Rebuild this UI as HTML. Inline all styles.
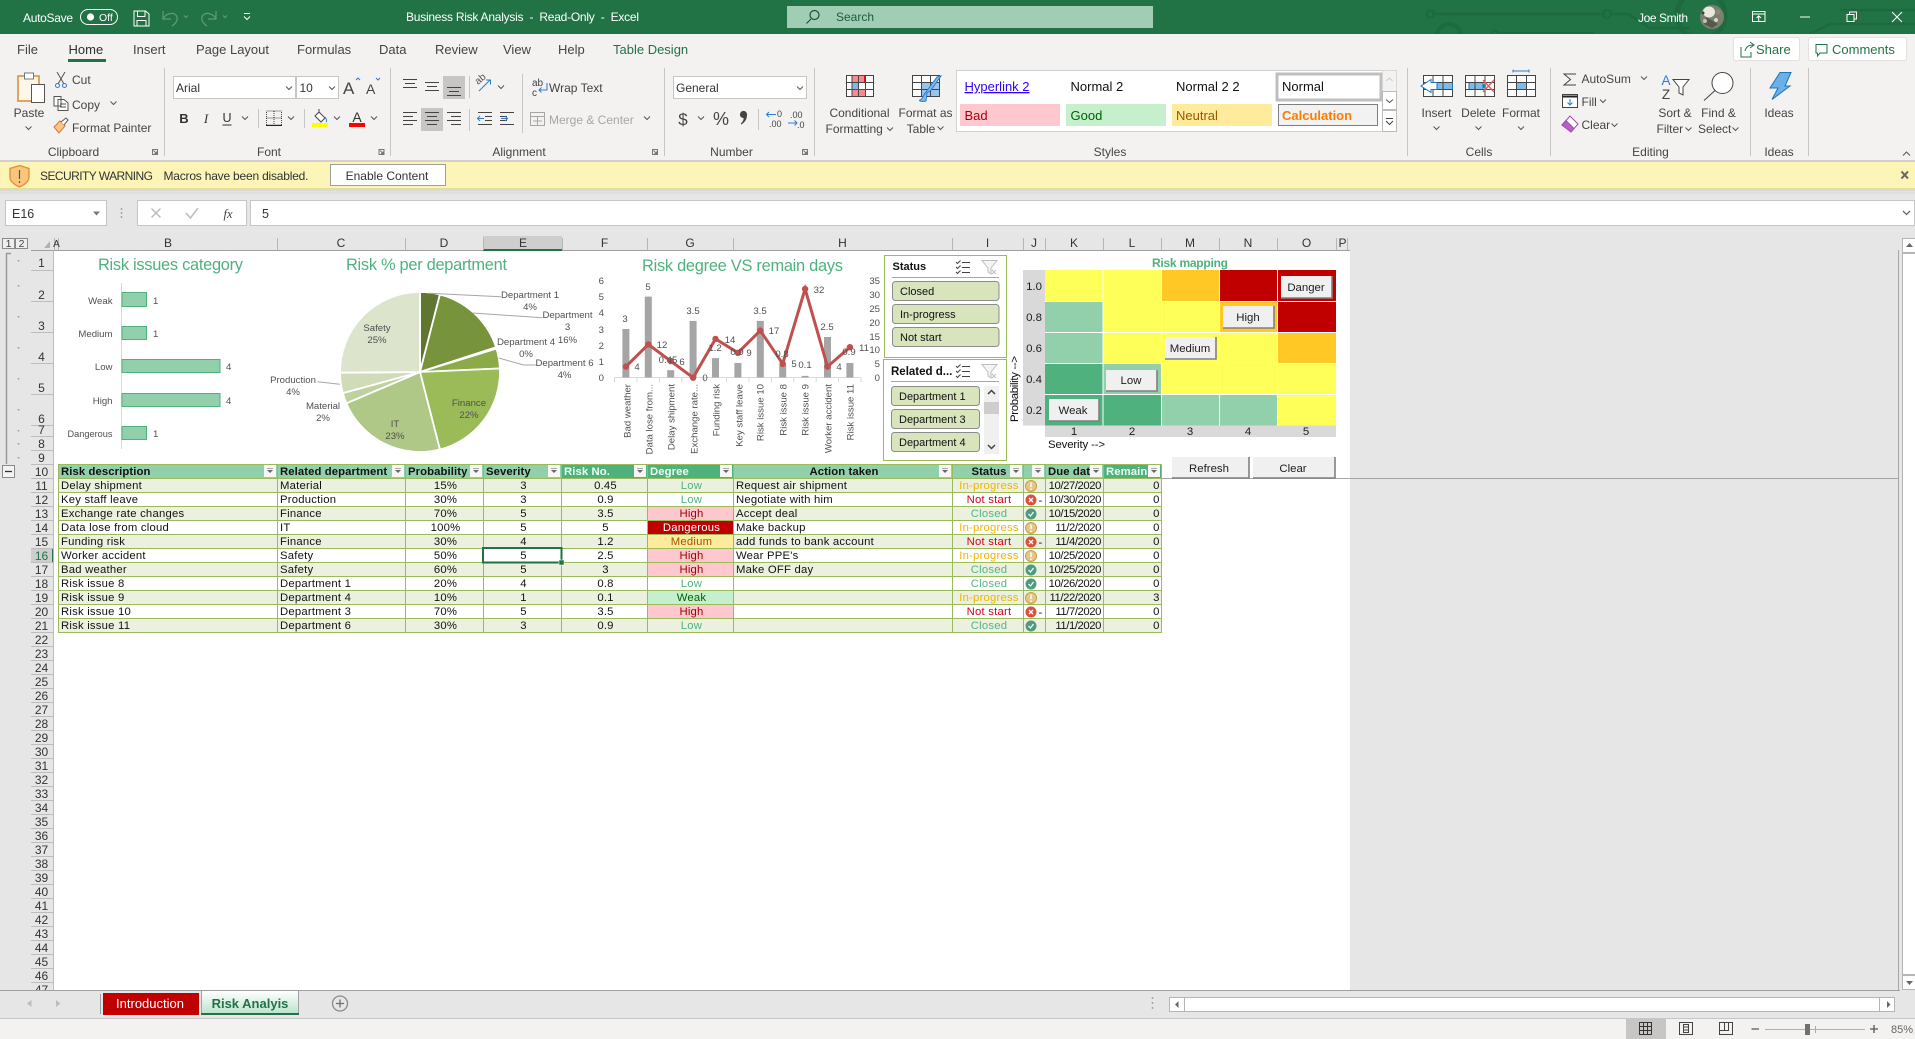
<!DOCTYPE html>
<html><head><meta charset="utf-8"><title>Business Risk Analysis - Excel</title>
<style>
html,body{margin:0;padding:0;width:1915px;height:1039px;overflow:hidden;background:#e6e6e6}
svg{position:absolute;left:0;top:0;display:block}
svg text{font-family:"Liberation Sans",Arial,sans-serif;font-size:12px;fill:#444}
.w text{fill:#fff}
.tb text{font-size:13px;fill:#444}
.rb text{font-size:12px;fill:#444}
.m{text-anchor:middle}.e{text-anchor:end}
.rh text{font-size:12px;fill:#333;text-anchor:middle}
.ch text{font-size:12px;fill:#333;text-anchor:middle}
.t text{font-size:16.4px;fill:#4fb27e;text-anchor:middle}
.l text{font-size:9.6px;fill:#505050}
.s text{font-size:11px;fill:#111}
.mp text{font-size:11.4px;fill:#1c1c1c}
table{position:absolute;left:58px;top:464px;border-collapse:collapse;table-layout:fixed;width:1103px;font:11.3px/11px "Liberation Sans",Arial,sans-serif;color:#111}
td,th{border:1px solid #9bbb59;padding:2px 0 0 2px;box-sizing:border-box;height:14px;white-space:nowrap;overflow:hidden;position:relative;text-align:left;font-weight:normal;letter-spacing:.22px;vertical-align:top}
th{background:#92d0ac;font-weight:bold;color:#111;letter-spacing:.1px}
th.d{background:#4fb27e;color:#eafff4}
tr.o td{background:#ebf1de}
td.c,th.c{text-align:center}
td.r{text-align:right;padding-right:2px;letter-spacing:-.42px}
th i{position:absolute;right:1px;top:0;width:12px;height:12px;background:#f6f6f6;border:0}
th i:after{content:"";position:absolute;left:3px;top:5px;border:3px solid transparent;border-top:3px solid #666;border-bottom:0}
th i:before{content:"";position:absolute;left:3px;top:3px;width:6px;height:1px;background:#aaa}
td.low{color:#4fb27e}
td.high{background:#ffc7ce!important;color:#9c0006}
td.dang{background:#c00000!important;color:#fff}
td.med{background:#ffeb9c!important;color:#9c5700}
td.weak{background:#c6efce!important;color:#006100}
td.ip{color:#f0b400}
td.ns{color:#d0021b}
td.cl{color:#52b788}
</style></head><body>
<svg width="1915" height="1039" viewBox="0 0 1915 1039">
<!-- title bar -->
<rect width="1915" height="34" fill="#217346"/>
<g fill="none" stroke="#1c6a3e" stroke-width="2.5">
<circle cx="1430" cy="14" r="3.5"/><path d="M1434 14H1602"/><circle cx="1607" cy="14" r="4"/><path d="M1611 14H1628L1650 28H1690"/>
<circle cx="1449" cy="36" r="12" stroke-width="4"/><circle cx="1495" cy="34" r="3.5"/><path d="M1499 33H1594"/>
<circle cx="1701" cy="15" r="24" stroke-width="5"/><path d="M1810 34L1830 24H1915M1840 10H1915"/></g>
<g class="w">
<text x="23" y="22" textLength="50">AutoSave</text>
<rect x="80.5" y="9.5" width="37" height="15" rx="7.5" fill="none" stroke="#fff"/><circle cx="90.5" cy="17" r="3.6" fill="#fff"/>
<text x="99" y="21" style="font-size:10.5px">Off</text>
<text x="406" y="21" textLength="233" style="font-size:12px;white-space:pre">Business Risk Analysis  -  Read-Only  -  Excel</text>
<text x="1638" y="22" textLength="50">Joe Smith</text>
</g>
<g fill="none" stroke="#fff">
<path d="M134 11H145.5L149 14V26H134ZM137.5 11V16.5H145V11M137 26V20.5H146V26"/>
<path d="M1752.5 11.5H1765V21.5H1752.5ZM1752.5 14H1765M1758.7 21V16M1756.5 18L1758.7 15.8L1761 18"/>
<path d="M1800 17H1810M1847 14.5V21.5H1854V14.5ZM1849.5 14V12H1856.5V19H1854"/>
<path d="M1892 12L1902 22M1902 12L1892 22"/></g>
<g fill="none" stroke="#5f9a7a" stroke-width="1.2">
<path d="M163 11V19H171M163 19C166 13 175 11 177 17C178 21 175 24 172 26M184 15.5l2 2 2-2M216 11V19H208M216 19C213 13 204 11 202 17C201 21 204 24 207 26M223 15.5l2 2 2-2"/></g>
<path d="M244 13.5H250M244 16.5l3 3 3-3" fill="none" stroke="#fff"/>
<rect x="787" y="6" width="366" height="22" fill="#a0cdb4"/>
<circle cx="814.5" cy="15" r="4.5" fill="none" stroke="#1a5436" stroke-width="1.2"/><path d="M811 19L806.5 23.5" stroke="#1a5436" stroke-width="1.2"/>
<text x="836" y="21" style="fill:#1d5c3c">Search</text>
<ellipse cx="1712" cy="17" rx="12" ry="12" fill="#7b7f70"/><ellipse cx="1709" cy="12" rx="6" ry="5.5" fill="#ece7dd"/><path d="M1706 17L1718 24L1712 28L1704 24Z" fill="#55584c"/><circle cx="1718" cy="12" r="2.5" fill="#8f8a78"/><circle cx="1705" cy="21" r="2" fill="#c5c0ae"/><circle cx="1716" cy="20" r="2" fill="#d8d3c4"/><circle cx="1703" cy="13" r="1.5" fill="#3c3f36"/>
<!-- ribbon -->
<rect y="34" width="1915" height="126" fill="#f3f2f1"/>
<g class="tb">
<text x="17" y="54">File</text><text x="68.5" y="54" style="fill:#2f2f2f">Home</text><text x="133" y="54">Insert</text><text x="196" y="54">Page Layout</text><text x="297" y="54">Formulas</text><text x="379" y="54">Data</text><text x="435" y="54">Review</text><text x="503" y="54">View</text><text x="558" y="54">Help</text><text x="613" y="54" style="fill:#217346">Table Design</text></g>
<rect x="68" y="59" width="38" height="3" fill="#217346"/>
<rect x="1733.5" y="37.5" width="66" height="23" rx="2" fill="#fff" stroke="#e3e2e0"/>
<rect x="1808.5" y="37.5" width="98" height="23" rx="2" fill="#fff" stroke="#e3e2e0"/>
<text x="1756" y="54" style="fill:#217346;font-size:13px">Share</text><text x="1832" y="54" style="fill:#217346;font-size:13px">Comments</text>
<path d="M1741 47V57H1751V52M1745 51C1746 47 1749 45 1753 45M1750 42L1754 45L1750 48" fill="none" stroke="#217346"/>
<path d="M1816 44.5H1827V53H1820L1817.5 56V53H1816Z" fill="none" stroke="#217346"/>
<path d="M164.5 68V156M390.5 68V156M664.5 68V156M814.5 68V156M1407.5 68V156M1550.5 68V156M1750.5 68V156M1808.5 68V156" stroke="#c8c6c4"/>
<path d="M258.5 109V128M304.5 109V128M469.5 76V98M469.5 109V131M522.5 74V133M758.5 109V130" stroke="#c8c6c4"/>
<!-- input boxes -->
<rect x="173.5" y="76.5" width="122" height="22" fill="#fff" stroke="#c8c6c4"/>
<rect x="296.5" y="76.5" width="42" height="22" fill="#fff" stroke="#c8c6c4"/>
<rect x="673.5" y="76.5" width="133" height="22" fill="#fff" stroke="#c8c6c4"/>
<g class="rb">
<text class="m" x="73.5" y="156">Clipboard</text><text class="m" x="269" y="156">Font</text><text class="m" x="519" y="156">Alignment</text><text class="m" x="731.5" y="156">Number</text><text class="m" x="1110" y="156">Styles</text><text class="m" x="1479" y="156">Cells</text><text class="m" x="1650.5" y="156">Editing</text><text class="m" x="1779" y="156">Ideas</text>
<text class="m" x="29" y="117">Paste</text><text x="72" y="84">Cut</text><text x="72" y="109">Copy</text><text x="72" y="132">Format Painter</text>
<text x="176" y="92" style="fill:#333">Arial</text><text x="299.5" y="92" style="fill:#333">10</text>
<text x="549" y="92">Wrap Text</text><text x="549" y="124" style="fill:#a6a6a6">Merge &amp; Center</text>
<text x="676" y="92" style="fill:#333">General</text>
<text class="m" x="859.5" y="117">Conditional</text><text x="825.5" y="133">Formatting</text>
<text class="m" x="925.5" y="117">Format as</text><text class="m" x="921" y="133">Table</text>
<text class="m" x="1436.5" y="117">Insert</text><text class="m" x="1478.5" y="117">Delete</text><text class="m" x="1521" y="117">Format</text>
<text x="1581.5" y="83">AutoSum</text><text x="1581.5" y="106">Fill</text><text x="1581.5" y="129">Clear</text>
<text class="m" x="1675" y="117">Sort &amp;</text><text x="1656.5" y="133">Filter</text>
<text class="m" x="1718.5" y="117">Find &amp;</text><text x="1698" y="133">Select</text>
<text class="m" x="1779" y="117">Ideas</text>
</g>
<!-- clipboard icons -->
<rect x="18" y="76" width="21" height="25" fill="#fdf6ea" stroke="#d98a2b" stroke-width="1.5"/>
<rect x="24.5" y="73" width="9" height="6" fill="#fff" stroke="#777"/>
<rect x="31.5" y="84.5" width="13" height="18" fill="#fff" stroke="#555"/>
<path d="M57 72L64 84M65 72L58 84" stroke="#555" fill="none"/><circle cx="57.5" cy="85.5" r="2" fill="none" stroke="#2b7cd3"/><circle cx="64.5" cy="85.5" r="2" fill="none" stroke="#2b7cd3"/>
<path d="M54 96.5H61L61 106H54ZM58 99.5H64L68 103V110.5H58ZM60 104H66M60 107H66" fill="#fdfdfd" stroke="#555"/>
<path d="M54 127L60 121L65 126L59 133Z" fill="#f7c68f" stroke="#d9772a"/><path d="M61 122L66 118L68 120L64 125" fill="#fff" stroke="#555"/>
<path d="M157.5 149.5H152.5V154.5H157.5ZM153.5 150.5L156.5 153.5M156.5 151.5V153.5H154.5" fill="none" stroke="#777"/>
<path d="M384 149.5H379V154.5H384ZM380 150.5L383 153.5M383 151.5V153.5H381" fill="none" stroke="#777"/>
<path d="M657.5 149.5H652.5V154.5H657.5ZM653.5 150.5L656.5 153.5M656.5 151.5V153.5H654.5" fill="none" stroke="#777"/>
<path d="M807.5 149.5H802.5V154.5H807.5ZM803.5 150.5L806.5 153.5M806.5 151.5V153.5H804.5" fill="none" stroke="#777"/>
<!-- font group -->
<text x="343" y="94" style="font-size:17px;fill:#444">A</text><path d="M356 80l2-2 2 2" fill="none" stroke="#2b7cd3"/>
<text x="366" y="94" style="font-size:14px;fill:#444">A</text><path d="M376 78l2 2 2-2" fill="none" stroke="#2b7cd3"/>
<text class="m" x="184" y="123" style="font-size:13px;font-weight:bold;fill:#333">B</text>
<text class="m" x="206" y="123" style="font-size:13px;font-style:italic;font-family:'Liberation Serif';fill:#333">I</text>
<text class="m" x="227" y="122" style="font-size:12.5px;fill:#333">U</text><path d="M222.5 125H231.5" stroke="#333"/>
<path d="M266.5 111H281.5V125H266.5Z M274 111V125 M266.5 118H281.5" fill="none" stroke="#444" stroke-dasharray="1 1"/><path d="M266 125.5H282" stroke="#222"/>
<path d="M319 112L325 118L321 122L315 116ZM319 112V109" fill="#fff" stroke="#444"/><path d="M325 117C327 120 327 121 326 122" stroke="#2b7cd3" fill="none"/><rect x="312" y="123" width="16" height="4" fill="#ffff00"/>
<text class="m" x="357" y="122" style="font-size:14px;fill:#333">A</text><rect x="349" y="123" width="16" height="4" fill="#ff0000"/>
<!-- alignment -->
<rect x="443" y="76" width="22" height="23" fill="#c8c6c4"/><rect x="421" y="108" width="22" height="23" fill="#c8c6c4"/>
<path d="M403 79.5H417M405 83.5H415M403 87.5H417M425 82.5H439M427 86.5H437M425 90.5H439M447 87.5H461M449 91.5H459M447 95.5H461
M403 112.5H417M403 116.5H413M403 120.5H417M403 124.5H413M425 112.5H439M427 116.5H437M425 120.5H439M427 124.5H437M447 112.5H461M451 116.5H461M447 120.5H461M451 124.5H461
M478 124.5H492M478 112.5H492M485 116.5H492M485 120.5H492M500 124.5H514M500 112.5H514M500 116.5H507M500 120.5H507" stroke="#444" fill="none"/>
<path d="M484 118.5H477.5M480 116L477.5 118.5L480 121M501 118.5H507.5M505 116L507.5 118.5L505 121" fill="none" stroke="#2b7cd3"/>
<path d="M479 91L490 80M486 80H490.5V84.5" stroke="#2b7cd3" fill="none"/><text x="478" y="85" transform="rotate(-40 478 85)" style="font-size:10px;fill:#555">ab</text>
<text x="532" y="86" style="font-size:10px;fill:#444">ab</text><text x="532" y="96" style="font-size:10px;fill:#444">c</text><path d="M547 83V90H539M541.5 87.5L539 90L541.5 92.5" stroke="#2b7cd3" fill="none"/>
<path d="M530.5 112.5H544.5V125.5H530.5ZM530.5 116.5H544.5M537.5 116.5V125.5M533 121H542" fill="none" stroke="#a6a6a6"/>
<!-- number -->
<text class="m" x="683" y="125" style="font-size:17px;fill:#444">$</text>
<text class="m" x="721" y="125" style="font-size:18px;fill:#444">%</text>
<circle cx="743.5" cy="114.5" r="3.6" fill="#444"/><path d="M746.8 115C747.2 119 745 122 741.5 124.5L740.8 123.5C743 121.5 744 119.5 743.5 117Z" fill="#444"/>
<text x="777" y="117" style="font-size:9px;fill:#444">0</text><text x="769" y="127" style="font-size:9px;fill:#444">.00</text>
<path d="M776 114.5H766.5M769 112L766.5 114.5L769 117" stroke="#2b7cd3" fill="none"/>
<text x="790" y="118" style="font-size:9px;fill:#444">.00</text><text x="797" y="128" style="font-size:9px;fill:#444">.0</text>
<path d="M788 123H797M794.5 120.5L797 123L794.5 125.5" stroke="#2b7cd3" fill="none"/>
<!-- CF icon -->
<rect x="846.5" y="75.5" width="27" height="21" fill="#fff"/>
<rect x="851.5" y="75.5" width="13" height="7" fill="#f9898c"/><rect x="851.5" y="82.5" width="7" height="7" fill="#7fb9e8"/><rect x="851.5" y="89.5" width="14" height="7" fill="#f9898c"/>
<path d="M846.5 75.5H873.5V96.5H846.5ZM846.5 82.5H873.5M846.5 89.5H873.5M852 75.5V96.5M858.5 75.5V96.5M865.5 75.5V96.5" fill="none" stroke="#444"/>
<path d="M851.5 75.5H864.5V82.5M851.5 89.5H865.5V96.5" fill="none" stroke="#d11"/>
<!-- FT icon -->
<rect x="912.5" y="75.5" width="27" height="21" fill="#fff"/><rect x="921.5" y="82.5" width="18" height="14" fill="#9ac4ec"/>
<path d="M912.5 75.5H939.5V96.5H912.5ZM912.5 82.5H939.5M912.5 89.5H939.5M921.5 75.5V96.5M930.5 75.5V96.5" fill="none" stroke="#444"/>
<path d="M941 76L931 90L927 93L926 101C922 102 918 101 920 100C923 99 923 95 926 92L937 77Z" fill="#7fb9e8" stroke="#2b7cd3"/>
<!-- styles gallery -->
<rect x="956.5" y="70.5" width="440" height="61" fill="#fff" stroke="#d0d0d0"/>
<text x="964.5" y="91" style="font-size:13px;fill:#3300ff;text-decoration:underline">Hyperlink 2</text>
<text x="1070.5" y="91" style="font-size:13px;fill:#111">Normal 2</text><text x="1176" y="91" style="font-size:13px;fill:#111">Normal 2 2</text>
<rect x="960" y="104" width="100" height="22" fill="#ffc7ce"/><text x="964.5" y="120" style="font-size:13px;fill:#9c0006">Bad</text>
<rect x="1066" y="104" width="100" height="22" fill="#c6efce"/><text x="1070.5" y="120" style="font-size:13px;fill:#006100">Good</text>
<rect x="1172" y="104" width="100" height="22" fill="#ffeb9c"/><text x="1176" y="120" style="font-size:13px;fill:#9c5700">Neutral</text>
<rect x="1277" y="74" width="104" height="26" fill="#fff" stroke="#bfbfbf" stroke-width="3"/><text x="1282" y="91" style="font-size:13px;fill:#111">Normal</text>
<rect x="1278.5" y="104.5" width="99" height="21" fill="#f2f2f2" stroke="#7f7f7f"/><text x="1282" y="120" style="font-size:13px;font-weight:bold;fill:#fa7d00">Calculation</text>
<rect x="1382.5" y="70.5" width="14" height="21" fill="#f3f2f1" stroke="#d8d8d8"/><rect x="1382.5" y="91.5" width="14" height="18" fill="#fff" stroke="#bbb"/><rect x="1382.5" y="110.5" width="14" height="21" fill="#fff" stroke="#bbb"/>
<path d="M1386.5 81l3-3 3 3" stroke="#ccc" fill="none"/><path d="M1386 118.5h7M1386 121l3.5 3.5 3.5-3.5" stroke="#444" fill="none"/>
<!-- cells icons -->
<g fill="none" stroke="#444">
<rect x="1423.5" y="75.5" width="29" height="21" fill="#fff"/><rect x="1465.5" y="75.5" width="29" height="21" fill="#fff"/><rect x="1507.5" y="75.5" width="28" height="21" fill="#fff"/>
<rect x="1431" y="82.5" width="21.5" height="7" fill="#7fb9e8" stroke="#1e74be"/><rect x="1469" y="82.5" width="14" height="7" fill="#7fb9e8" stroke="#1e74be"/><rect x="1516.5" y="82.5" width="10" height="7" fill="#7fb9e8" stroke="#1e74be"/>
<path d="M1423.5 82.5H1452.5M1423.5 89.5H1452.5M1433 75.5V96.5M1443 75.5V96.5M1465.5 82.5H1494.5M1465.5 89.5H1494.5M1475 75.5V96.5M1485 75.5V96.5M1507.5 82.5H1535.5M1507.5 89.5H1535.5M1516.5 75.5V96.5M1526.5 75.5V96.5"/>
</g>
<path d="M1431 79.5L1421 86L1431 92.5V89.5H1437V82.5H1431Z" fill="#fff" stroke="#1e74be"/>
<path d="M1483 80L1494 92M1494 80L1483 92" stroke="#ef5b5b" stroke-width="1.5"/><path d="M1483 83.5L1486.5 86L1483 88.5Z" fill="#1e74be"/>
<path d="M1513 71H1529M1513 69.5V72.5M1529 69.5V72.5" stroke="#2b7cd3" fill="none"/>
<!-- editing icons -->
<path d="M1576 74H1564L1570.5 79.5L1564 85H1576" fill="none" stroke="#444"/>
<rect x="1562.5" y="94.5" width="15" height="13" fill="#fff" stroke="#444"/><path d="M1562.5 96.5H1577.5" stroke="#222" stroke-width="2"/><path d="M1570 99V105M1567.5 102.5L1570 105L1572.5 102.5" fill="none" stroke="#2b7cd3"/>
<path d="M1562 125L1570 116L1578 124L1571 132Z" fill="#fff" stroke="#a349b6"/><path d="M1562 125L1566 120.5L1574 128.5L1571 132Z" fill="#b660c5" stroke="#a349b6"/>
<text class="m" x="1666" y="85" style="font-size:13.5px;fill:#2b7cd3">A</text><text class="m" x="1666" y="99" style="font-size:13.5px;fill:#444">Z</text>
<path d="M1673 79.5H1689L1683 87V95L1679 93V87Z" fill="#fff" stroke="#444"/>
<circle cx="1722.5" cy="83" r="10.5" fill="#fff" stroke="#444"/><path d="M1715 90.5L1704 100.5" stroke="#444"/>
<path d="M1780 72.5H1791L1785 86H1790L1772 99.5L1778 88H1770Z" fill="#6cb0e8" stroke="#1e74be"/>
<path d="M286 86.5l3 3 3-3M329 86.5l3 3 3-3M242 116.5l3 3 3-3M288 116.5l3 3 3-3M334 116.5l3 3 3-3M371 116.5l3 3 3-3M498 85.5l3 3 3-3M644 116.5l3 3 3-3M797 86.5l3 3 3-3M698 116.5l3 3 3-3M887 127.5l3 3 3-3M937.5 126.5l3 3 3-3M1433.5 126.5l3 3 3-3M1475.5 126.5l3 3 3-3M1518 126.5l3 3 3-3M1641 76.5l3 3 3-3M1600 99.5l3 3 3-3M1611.5 123.5l3 3 3-3M1685.5 127.5l3 3 3-3M1732.5 127.5l3 3 3-3M1386 99.5l3.5 3 3.5-3M25.5 126.5l3 3 3-3M110.5 101.5l3 3 3-3" fill="none" stroke="#555"/>
<path d="M1903 155.5l3.5-3.5 3.5 3.5" fill="none" stroke="#555"/>
<!-- security bar -->
<rect y="160" width="1915" height="2" fill="#d2d0ce"/>
<rect y="162" width="1915" height="27" fill="#fcf5b7"/><rect y="188" width="1915" height="1" fill="#e3dc9a"/>
<rect y="189" width="1915" height="850" fill="#e6e6e6"/><rect y="189" width="1915" height="2" fill="#d9d9d9"/><rect y="191" width="1915" height="3" fill="#e0e0e0"/>
<path d="M19.5 165.5L29 168.5V177C29 182 24 185 19.5 187C15 185 10 182 10 177V168.5Z" fill="#f8c77e" stroke="#e88c2c" stroke-width="1.3"/>
<path d="M19.5 170V179M19.5 181V183" stroke="#555" stroke-width="1.2"/>
<text x="40" y="180" textLength="113" style="fill:#333">SECURITY WARNING</text>
<text x="163.5" y="180" textLength="145" style="fill:#333">Macros have been disabled.</text>
<rect x="330.5" y="164.5" width="115" height="21" fill="#fff" stroke="#9f9f9f"/>
<text class="m" x="387" y="180" style="fill:#333">Enable Content</text>
<path d="M1901.5 171.5L1908 178.5M1908 171.5L1901.5 178.5" stroke="#666" stroke-width="2"/>
<!-- formula bar -->
<rect x="5.5" y="200.5" width="101" height="25" fill="#fff" stroke="#c8c6c4"/>
<text x="12" y="218" style="font-size:12.5px;fill:#333">E16</text><path d="M93 211.5H100L96.5 215.5Z" fill="#777"/>
<path d="M121.5 208V210M121.5 212V214M121.5 216V218" stroke="#a6a6a6" stroke-width="1.5"/>
<rect x="137.5" y="200.5" width="109" height="25" fill="#fff" stroke="#c8c6c4"/>
<path d="M151.5 208.5L160.5 217.5M160.5 208.5L151.5 217.5" stroke="#bbb" stroke-width="1.5"/><path d="M186 213L190.5 218L198 208" stroke="#bbb" stroke-width="1.5" fill="none"/>
<text class="m" x="228" y="218" style="font-size:12.5px;font-style:italic;font-family:'Liberation Serif';fill:#444">fx</text>
<rect x="250.5" y="200.5" width="1664" height="25" fill="#fff" stroke="#c8c6c4"/>
<text x="262" y="218" style="font-size:12.5px;fill:#333">5</text>
<path d="M1903 211l3.5 3.5 3.5-3.5" fill="none" stroke="#666" stroke-width="1.3"/>
<!-- sheet -->
<rect x="54" y="250" width="1296" height="740" fill="#fff"/>
<!-- col header -->
<rect x="483" y="236" width="79" height="14" fill="#cecece"/>
<path d="M31 250.5H1350" stroke="#9f9f9f"/><rect x="483" y="249" width="79" height="2" fill="#217346"/>
<path d="M54.5 238V250M58.5 238V250M277.5 238V250M405.5 238V250M483.5 238V250M562.5 238V250M647.5 238V250M733.5 238V250M952.5 238V250M1023.5 238V250M1045.5 238V250M1103.5 238V250M1161.5 238V250M1219.5 238V250M1277.5 238V250M1336.5 238V250M1347.5 238V250" stroke="#b5b5b5"/>
<path d="M44 248L50 241V248Z" fill="#b0b0b0"/>
<g class="ch"><text x="56.5" y="247" style="font-size:10px">A</text><text x="168" y="247">B</text><text x="341" y="247">C</text><text x="444" y="247">D</text><text x="523" y="247">E</text><text x="604.5" y="247">F</text><text x="690" y="247">G</text><text x="842.5" y="247">H</text><text x="987.5" y="247">I</text><text x="1034" y="247">J</text><text x="1074" y="247">K</text><text x="1132" y="247">L</text><text x="1190" y="247">M</text><text x="1248" y="247">N</text><text x="1306.5" y="247">O</text><text x="1342.5" y="247">P</text></g>
<!-- outline -->
<rect x="2.5" y="238.5" width="12" height="10" fill="#efefef" stroke="#8a8a8a"/><rect x="15.5" y="238.5" width="12" height="10" fill="#efefef" stroke="#8a8a8a"/>
<text class="m" x="8.5" y="247" style="font-size:10.5px;fill:#444">1</text><text class="m" x="21.5" y="247" style="font-size:10.5px;fill:#444">2</text>
<path d="M11 253.5H6.5V464" fill="none" stroke="#9a9a9a" stroke-width="1.5"/>
<path d="M18.5 260v1.5M18.5 285v1.5M18.5 316v1.5M18.5 347v1.5M18.5 378v1.5M18.5 409v1.5M18.5 430v1.5M18.5 443v1.5M18.5 457v1.5" stroke="#9a9a9a" stroke-width="1.5"/>
<rect x="2.5" y="465.5" width="12" height="12" fill="#f4f4f4" stroke="#8a8a8a"/><path d="M5 471.5H12" stroke="#333" stroke-width="1.3"/>
<!-- row header -->
<rect x="31" y="548" width="23" height="14" fill="#cecece"/><rect x="52" y="548" width="2" height="14" fill="#217346"/>
<path d="M31 270.5H54M31 301.5H54M31 332.5H54M31 363.5H54M31 394.5H54M31 425.5H54M31 436.5H54M31 450.5H54M31 464.5H54M31 478.5H54M31 492.5H54M31 506.5H54M31 520.5H54M31 534.5H54M31 548.5H54M31 562.5H54M31 576.5H54M31 590.5H54M31 604.5H54M31 618.5H54M31 632.5H54M31 646.5H54M31 660.5H54M31 674.5H54M31 688.5H54M31 702.5H54M31 716.5H54M31 730.5H54M31 744.5H54M31 758.5H54M31 772.5H54M31 786.5H54M31 800.5H54M31 814.5H54M31 828.5H54M31 842.5H54M31 856.5H54M31 870.5H54M31 884.5H54M31 898.5H54M31 912.5H54M31 926.5H54M31 940.5H54M31 954.5H54M31 968.5H54M31 982.5H54M53.5 250V990" stroke="#bdbdbd"/>
<g class="rh">
<text x="41.5" y="267">1</text><text x="41.5" y="299">2</text><text x="41.5" y="330">3</text><text x="41.5" y="361">4</text><text x="41.5" y="392">5</text><text x="41.5" y="423">6</text><text x="41.5" y="434">7</text><text x="41.5" y="448">8</text><text x="41.5" y="462">9</text><text x="41.5" y="476">10</text>
<text x="41.5" y="490">11</text><text x="41.5" y="504">12</text><text x="41.5" y="518">13</text><text x="41.5" y="532">14</text><text x="41.5" y="546">15</text><text x="41.5" y="560" style="fill:#217346">16</text><text x="41.5" y="574">17</text><text x="41.5" y="588">18</text><text x="41.5" y="602">19</text><text x="41.5" y="616">20</text><text x="41.5" y="630">21</text><text x="41.5" y="644">22</text><text x="41.5" y="658">23</text><text x="41.5" y="672">24</text><text x="41.5" y="686">25</text><text x="41.5" y="700">26</text><text x="41.5" y="714">27</text><text x="41.5" y="728">28</text><text x="41.5" y="742">29</text><text x="41.5" y="756">30</text><text x="41.5" y="770">31</text><text x="41.5" y="784">32</text><text x="41.5" y="798">33</text><text x="41.5" y="812">34</text><text x="41.5" y="826">35</text><text x="41.5" y="840">36</text><text x="41.5" y="854">37</text><text x="41.5" y="868">38</text><text x="41.5" y="882">39</text><text x="41.5" y="896">40</text><text x="41.5" y="910">41</text><text x="41.5" y="924">42</text><text x="41.5" y="938">43</text><text x="41.5" y="952">44</text><text x="41.5" y="966">45</text><text x="41.5" y="980">46</text><text x="41.5" y="994">47</text></g>
<!-- freeze & scroll lines -->
<path d="M1161 478.5H1898" stroke="#a6a6a6"/>
<path d="M1898.5 250V990" stroke="#a6a6a6"/>
<rect x="1902.5" y="238.5" width="13" height="736" fill="#fff" stroke="#b5b5b5"/><rect x="1903" y="252" width="12" height="2" fill="#b5b5b5"/>
<path d="M1906 247H1913L1909.5 243Z" fill="#666"/>
<rect x="1902.5" y="975.5" width="13" height="14" fill="#fff" stroke="#b5b5b5"/><path d="M1906 981H1913L1909.5 985Z" fill="#666"/>
<!-- chart titles -->
<g class="t"><text x="170.5" y="270" textLength="145">Risk issues category</text><text x="426.5" y="270" textLength="161">Risk % per department</text><text x="742.5" y="271" textLength="201">Risk degree VS remain days</text></g>
<!-- bar chart -->
<path d="M121.5 283V449" stroke="#d9d9d9"/>
<g fill="#92d0ac" stroke="#4fb27e"><rect x="122" y="292.5" width="24.5" height="14"/><rect x="122" y="326.5" width="24.5" height="13"/><rect x="122" y="359.5" width="98" height="13"/><rect x="122" y="393.5" width="98" height="13"/><rect x="122" y="426.5" width="24.5" height="13"/></g>
<g class="l">
<text class="e" x="112.5" y="304">Weak</text><text class="e" x="112.5" y="337">Medium</text><text class="e" x="112.5" y="370">Low</text><text class="e" x="112.5" y="404">High</text><text class="e" x="112.5" y="437" style="font-size:9.2px">Dangerous</text>
<text x="153" y="304">1</text><text x="153" y="337">1</text><text x="226" y="370">4</text><text x="226" y="404">4</text><text x="153" y="437">1</text>
<!-- pie labels -->
<text class="m" x="530" y="298">Department 1</text><text class="m" x="530" y="310">4%</text>
<text class="m" x="567.5" y="318">Department</text><text class="m" x="567.5" y="330">3</text><text class="m" x="567.5" y="343">16%</text>
<text class="m" x="526" y="345">Department 4</text><text class="m" x="526" y="357">0%</text>
<text class="m" x="564.5" y="366">Department 6</text><text class="m" x="564.5" y="378">4%</text>
<text class="m" x="293" y="383">Production</text><text class="m" x="293" y="395">4%</text>
<text class="m" x="323" y="409">Material</text><text class="m" x="323" y="421">2%</text>
</g>
<g stroke="#fff" stroke-width="1.8">
<path d="M420 372L420 292A80 80 0 0 1 439.9 294.5Z" fill="#5f7530"/>
<path d="M420 372L439.9 294.5A80 80 0 0 1 496.1 347.3Z" fill="#77933c"/>
<path d="M420 372L496.1 347.3A80 80 0 0 1 496.5 348.6Z" fill="#85a243"/>
<path d="M420 372L496.5 348.6A80 80 0 0 1 499.9 368.5Z" fill="#8cab48"/>
<path d="M420 372L499.9 368.5A80 80 0 0 1 439.9 449.5Z" fill="#9bbb59"/>
<path d="M420 372L439.9 449.5A80 80 0 0 1 346.4 403.3Z" fill="#afc787"/>
<path d="M420 372L346.4 403.3A80 80 0 0 1 342.8 393.1Z" fill="#bfd19e"/>
<path d="M420 372L342.8 393.1A80 80 0 0 1 340 372.7Z" fill="#d0dcb8"/>
<path d="M420 372L340 372.7A80 80 0 0 1 420 292Z" fill="#dce5cc"/>
</g>
<path d="M428.5 293.3L501 296.7M472.5 313L542.5 317.7M498.7 358L523.5 365H535.8M317.5 381.7L339.8 384.3" fill="none" stroke="#a6a6a6"/>
<g class="l"><text class="m" x="377" y="331">Safety</text><text class="m" x="377" y="343">25%</text><text class="m" x="469" y="406">Finance</text><text class="m" x="469" y="418">22%</text><text class="m" x="395" y="427">IT</text><text class="m" x="395" y="439">23%</text></g>
<!-- combo chart -->
<path d="M614.5 377.5H860.5M614.5 377.5v5M637 377.5v5M659.4 377.5v5M681.8 377.5v5M704.2 377.5v5M726.6 377.5v5M749 377.5v5M771.4 377.5v5M793.8 377.5v5M816.2 377.5v5M838.6 377.5v5M861 377.5v5" stroke="#d9d9d9" fill="none"/>
<g fill="#a5a5a5"><rect x="622.4" y="329" width="7" height="48.5"/><rect x="644.8" y="296.6" width="7" height="80.9"/><rect x="667.2" y="370.2" width="7" height="7.3"/><rect x="689.6" y="320.9" width="7" height="56.6"/><rect x="712" y="358.1" width="7" height="19.4"/><rect x="734.4" y="363" width="7" height="14.5"/><rect x="756.8" y="320.9" width="7" height="56.6"/><rect x="779.2" y="364.6" width="7" height="12.9"/><rect x="801.6" y="375.9" width="7" height="1.6"/><rect x="824" y="337" width="7" height="40.5"/><rect x="846.4" y="363" width="7" height="14.5"/></g>
<path d="M625.9 366.6L648.3 344.4L670.7 361.1L693.1 377.7L715.5 338.9L737.9 352.8L760.3 330.6L782.7 363.8L805.1 289L827.5 366.6L849.9 347.2" fill="none" stroke="#c0504d" stroke-width="3"/>
<g fill="#c0504d"><circle cx="625.9" cy="366.6" r="3.2"/><circle cx="648.3" cy="344.4" r="3.2"/><circle cx="670.7" cy="361.1" r="3.2"/><circle cx="693.1" cy="377.7" r="3.2"/><circle cx="715.5" cy="338.9" r="3.2"/><circle cx="737.9" cy="352.8" r="3.2"/><circle cx="760.3" cy="330.6" r="3.2"/><circle cx="782.7" cy="363.8" r="3.2"/><circle cx="805.1" cy="289" r="3.2"/><circle cx="827.5" cy="366.6" r="3.2"/><circle cx="849.9" cy="347.2" r="3.2"/></g>
<g class="l">
<text class="e" x="604" y="284">6</text><text class="e" x="604" y="300">5</text><text class="e" x="604" y="316">4</text><text class="e" x="604" y="333">3</text><text class="e" x="604" y="349">2</text><text class="e" x="604" y="365">1</text><text class="e" x="604" y="381">0</text>
<text class="e" x="880" y="284">35</text><text class="e" x="880" y="298">30</text><text class="e" x="880" y="312">25</text><text class="e" x="880" y="326">20</text><text class="e" x="880" y="340">15</text><text class="e" x="880" y="353">10</text><text class="e" x="880" y="367">5</text><text class="e" x="880" y="381">0</text>
<text class="m" x="625" y="322">3</text><text class="m" x="648" y="290">5</text><text class="m" x="668" y="363">0.45</text><text class="m" x="693" y="314">3.5</text><text class="m" x="715" y="351">1.2</text><text class="m" x="737" y="355">0.9</text><text class="m" x="760" y="314">3.5</text><text class="m" x="782" y="357">0.8</text><text class="m" x="805" y="368">0.1</text><text class="m" x="827" y="330">2.5</text><text class="m" x="849" y="355">0.9</text>
<text class="m" x="637" y="370">4</text><text class="m" x="662" y="348">12</text><text class="m" x="682" y="365">6</text><text class="m" x="705" y="381">0</text><text class="m" x="730" y="343">14</text><text class="m" x="749" y="356">9</text><text class="m" x="774" y="334">17</text><text class="m" x="794" y="367">5</text><text class="m" x="819" y="293">32</text><text class="m" x="839" y="370">4</text><text class="m" x="864" y="351">11</text>
<g transform="translate(627,384) rotate(-90)"><text class="e" dy="3.4">Bad weather</text></g>
<g transform="translate(649,384) rotate(-90)"><text class="e" dy="3.4">Data lose from...</text></g>
<g transform="translate(671,384) rotate(-90)"><text class="e" dy="3.4">Delay shipment</text></g>
<g transform="translate(694,384) rotate(-90)"><text class="e" dy="3.4">Exchange rate...</text></g>
<g transform="translate(716,384) rotate(-90)"><text class="e" dy="3.4">Funding risk</text></g>
<g transform="translate(739,384) rotate(-90)"><text class="e" dy="3.4">Key staff leave</text></g>
<g transform="translate(760,384) rotate(-90)"><text class="e" dy="3.4">Risk issue 10</text></g>
<g transform="translate(783,384) rotate(-90)"><text class="e" dy="3.4">Risk issue 8</text></g>
<g transform="translate(805,384) rotate(-90)"><text class="e" dy="3.4">Risk issue 9</text></g>
<g transform="translate(828,384) rotate(-90)"><text class="e" dy="3.4">Worker accident</text></g>
<g transform="translate(850,384) rotate(-90)"><text class="e" dy="3.4">Risk issue 11</text></g>
</g>
<!-- slicers -->
<rect x="884.5" y="255.5" width="122" height="102" fill="#fff" stroke="#9bbb59"/>
<rect x="883.5" y="359.5" width="123" height="101" fill="#fff" stroke="#9bbb59"/>
<path d="M892 277.5H999M891 381.5H999" stroke="#9bbb59"/>
<text x="892.5" y="270" style="font-size:11px;font-weight:bold;fill:#111">Status</text>
<text x="891" y="375" style="font-size:11.5px;font-weight:bold;fill:#111">Related d...</text>
<g fill="#d8e4bc" stroke="#8c8c8c"><rect x="892.5" y="281.5" width="106.5" height="19" rx="3"/><rect x="892.5" y="304.5" width="106.5" height="19" rx="3"/><rect x="892.5" y="327.5" width="106.5" height="19" rx="3"/><rect x="891.5" y="386.5" width="88" height="19" rx="3"/><rect x="891.5" y="409.5" width="88" height="19" rx="3"/><rect x="891.5" y="432.5" width="88" height="19" rx="3"/></g>
<g class="s"><text x="900" y="295">Closed</text><text x="900" y="318">In-progress</text><text x="900" y="341">Not start</text><text x="899" y="400">Department 1</text><text x="899" y="423">Department 3</text><text x="899" y="446">Department 4</text></g>
<rect x="984" y="386" width="15" height="68" fill="#f0f0f0"/><rect x="984" y="402" width="15" height="12" fill="#cdcdcd"/>
<path d="M988 394l3.5-3.5 3.5 3.5M988 445l3.5 3.5 3.5-3.5" fill="none" stroke="#444" stroke-width="1.5"/>
<path d="M956 262l1.5 1.5 3-3M956 267l1.5 1.5 3-3M956 272l1.5 1.5 3-3M962 262.5H970M962 267.5H970M962 272.5H970M956 366l1.5 1.5 3-3M956 371l1.5 1.5 3-3M956 376l1.5 1.5 3-3M962 366.5H970M962 371.5H970M962 376.5H970" fill="none" stroke="#444"/>
<path d="M982 260.5H997L991 268V274L988 272V268ZM982 364.5H997L991 372V378L988 376V372Z" fill="#f4f4f4" stroke="#bdbdbd"/>
<path d="M992 270l4 4M996 270l-4 4M992 374l4 4M996 374l-4 4" stroke="#bdbdbd"/>
<!-- risk map -->
<text class="m" x="1190" y="267" textLength="76" style="font-size:12px;font-weight:bold;fill:#4fb27e">Risk mapping</text>
<rect x="1023" y="270" width="22" height="155.5" fill="#d9d9d9"/><rect x="1045" y="425.5" width="291" height="11.5" fill="#d9d9d9"/>
<rect x="1045" y="270" width="291" height="155.5" fill="#fff"/>
<g fill="#ffff59"><rect x="1045" y="270" width="57.5" height="31"/><rect x="1103.5" y="270" width="57.5" height="31"/><rect x="1103.5" y="302" width="57.5" height="30"/><rect x="1162" y="302" width="57" height="30"/><rect x="1103.5" y="333" width="57.5" height="30"/><rect x="1162" y="333" width="57" height="30"/><rect x="1220" y="333" width="57" height="30"/><rect x="1162" y="364" width="57" height="30"/><rect x="1220" y="364" width="57" height="30"/><rect x="1278" y="364" width="58" height="30"/><rect x="1278" y="395" width="58" height="30.5"/></g>
<g fill="#ffc824"><rect x="1162" y="270" width="57" height="31"/><rect x="1220" y="302" width="57" height="30"/><rect x="1278" y="333" width="58" height="30"/></g>
<g fill="#c00000"><rect x="1220" y="270" width="57" height="31"/><rect x="1278" y="270" width="58" height="31"/><rect x="1278" y="302" width="58" height="30"/></g>
<g fill="#92d0ac"><rect x="1045" y="302" width="57.5" height="30"/><rect x="1045" y="333" width="57.5" height="30"/><rect x="1103.5" y="364" width="57.5" height="30"/><rect x="1162" y="395" width="57" height="30.5"/><rect x="1220" y="395" width="57" height="30.5"/></g>
<g fill="#4fb27e"><rect x="1045" y="364" width="57.5" height="30"/><rect x="1045" y="395" width="57.5" height="30.5"/><rect x="1103.5" y="395" width="57.5" height="30.5"/></g>
<g class="mp">
<text class="m" x="1034" y="290">1.0</text><text class="m" x="1034" y="321">0.8</text><text class="m" x="1034" y="352">0.6</text><text class="m" x="1034" y="383">0.4</text><text class="m" x="1034" y="414">0.2</text>
<text class="m" x="1074" y="435">1</text><text class="m" x="1132" y="435">2</text><text class="m" x="1190" y="435">3</text><text class="m" x="1248" y="435">4</text><text class="m" x="1306" y="435">5</text>
<text x="1048" y="448" textLength="57" style="fill:#111">Severity --&gt;</text>
<g transform="translate(1018,422) rotate(-90)"><text textLength="66" style="fill:#111">Probability --&gt;</text></g>
</g>
<g fill="#f0f0f0" stroke="none"><rect x="1281" y="276" width="51" height="22"/><rect x="1223" y="306" width="51" height="22"/><rect x="1165" y="337" width="51" height="22"/><rect x="1106" y="370" width="51" height="21"/><rect x="1049" y="399" width="50" height="22"/><rect x="1172" y="457" width="77" height="21"/><rect x="1253" y="457" width="82" height="21"/></g>
<path d="M1332 276V298H1281M1274 306V328H1223M1216 337V359H1165M1157 370V391H1106M1099 399V421H1049M1249 457V478H1172M1335 457V478H1253" fill="none" stroke="#808080" stroke-width="1.6"/>
<g class="mp"><text class="m" x="1306" y="291">Danger</text><text class="m" x="1248" y="321">High</text><text class="m" x="1190" y="352">Medium</text><text class="m" x="1131" y="384">Low</text><text class="m" x="1073" y="414">Weak</text><text class="m" x="1209" y="472">Refresh</text><text class="m" x="1293" y="472">Clear</text></g>
<!-- bottom -->
<rect y="990" width="1915" height="28" fill="#e6e6e6"/><rect y="990" width="1900" height="1" fill="#a0a0a0"/>
<rect y="1018" width="1915" height="21" fill="#f3f2f1"/><rect y="1018" width="1915" height="1" fill="#c8c6c4"/>
<path d="M31.5 1000V1007L27 1003.5ZM56 1000V1007L60.5 1003.5Z" fill="#bdbdbd"/>
<path d="M100.5 994V1014" stroke="#9f9f9f"/>
<rect x="103" y="993" width="96" height="22" fill="#c00000"/>
<text class="m" x="150" y="1008" style="font-size:13px;fill:#fff">Introduction</text>
<defs><linearGradient id="g" x1="0" y1="0" x2="0" y2="1"><stop offset="0" stop-color="#fff"/><stop offset="1" stop-color="#b9e3cb"/></linearGradient></defs>
<rect x="201" y="991" width="97" height="23" fill="url(#g)"/>
<path d="M201.5 991V1014M298.5 990V1014" stroke="#a0a0a0"/><rect x="201" y="1013" width="98" height="2" fill="#217346"/>
<text class="m" x="250" y="1008" style="font-size:13px;font-weight:bold;fill:#217346">Risk Analyis</text>
<circle cx="340" cy="1003.5" r="7.5" fill="none" stroke="#8a8a8a" stroke-width="1.3"/><path d="M336 1003.5H344M340 999.5V1007.5" stroke="#6f6f6f" stroke-width="1.3"/>
<path d="M1152.5 997v2M1152.5 1002v2M1152.5 1007v2" stroke="#a6a6a6" stroke-width="1.5"/>
<rect x="1169.5" y="997.5" width="725" height="14" fill="#fff" stroke="#b5b5b5"/>
<path d="M1184.5 997.5V1011.5M1879.5 997.5V1011.5" stroke="#b5b5b5"/>
<path d="M1178.5 1001V1008L1175 1004.5ZM1887 1001V1008L1890.5 1004.5Z" fill="#666"/>
<rect x="1626" y="1019" width="40" height="20" fill="#c8c6c4"/>
<path d="M1639.5 1022.5H1651.5V1034.5H1639.5ZM1639.5 1026.5H1651.5M1639.5 1030.5H1651.5M1643.5 1022.5V1034.5M1647.5 1022.5V1034.5" fill="none" stroke="#333"/>
<path d="M1679.5 1022.5H1692.5V1034.5H1679.5ZM1683.5 1024.5H1688.5V1032.5H1683.5ZM1684 1027H1688M1684 1030H1688" fill="none" stroke="#444"/>
<path d="M1719.5 1022.5H1732.5V1034.5H1719.5ZM1719.5 1030.5H1728.5V1022.5M1724.5 1022.5V1030.5" fill="none" stroke="#444"/>
<path d="M1751.5 1029H1759M1870 1029H1878M1874 1025V1033" stroke="#555" stroke-width="1.3"/>
<path d="M1765 1029.5H1865" stroke="#b0b0b0"/><path d="M1815.5 1026V1033" stroke="#aaa"/><rect x="1805" y="1024" width="5" height="11" fill="#707070"/>
<text x="1891" y="1033" style="font-size:11px;fill:#666">85%</text>
</svg>

<table>
<colgroup><col style="width:219px"><col style="width:128px"><col style="width:78px"><col style="width:78px"><col style="width:86px"><col style="width:86px"><col style="width:219px"><col style="width:71px"><col style="width:22px"><col style="width:58px"><col style="width:58px"></colgroup>
<tr><th>Risk description<i></i></th><th>Related department<i></i></th><th>Probability<i></i></th><th>Severity<i></i></th><th class="d">Risk No.<i></i></th><th class="d">Degree<i></i></th><th class="c">Action taken<i></i></th><th class="c">Status<i></i></th><th><i></i></th><th>Due dat<i></i></th><th class="d">Remain<i></i></th></tr>
<tr class="o"><td>Delay shipment</td><td>Material</td><td class="c">15%</td><td class="c">3</td><td class="c">0.45</td><td class="c low">Low</td><td>Request air shipment</td><td class="c ip">In-progress</td><td></td><td class="r">10/27/2020</td><td class="r">0</td></tr>
<tr><td>Key staff leave</td><td>Production</td><td class="c">30%</td><td class="c">3</td><td class="c">0.9</td><td class="c low">Low</td><td>Negotiate with him</td><td class="c ns">Not start</td><td></td><td class="r">10/30/2020</td><td class="r">0</td></tr>
<tr class="o"><td>Exchange rate changes</td><td>Finance</td><td class="c">70%</td><td class="c">5</td><td class="c">3.5</td><td class="c high">High</td><td>Accept deal</td><td class="c cl">Closed</td><td></td><td class="r">10/15/2020</td><td class="r">0</td></tr>
<tr><td>Data lose from cloud</td><td>IT</td><td class="c">100%</td><td class="c">5</td><td class="c">5</td><td class="c dang">Dangerous</td><td>Make backup</td><td class="c ip">In-progress</td><td></td><td class="r">11/2/2020</td><td class="r">0</td></tr>
<tr class="o"><td>Funding risk</td><td>Finance</td><td class="c">30%</td><td class="c">4</td><td class="c">1.2</td><td class="c med">Medium</td><td>add funds to bank account</td><td class="c ns">Not start</td><td></td><td class="r">11/4/2020</td><td class="r">0</td></tr>
<tr><td>Worker accident</td><td>Safety</td><td class="c">50%</td><td class="c">5</td><td class="c">2.5</td><td class="c high">High</td><td>Wear PPE's</td><td class="c ip">In-progress</td><td></td><td class="r">10/25/2020</td><td class="r">0</td></tr>
<tr class="o"><td>Bad weather</td><td>Safety</td><td class="c">60%</td><td class="c">5</td><td class="c">3</td><td class="c high">High</td><td>Make OFF day</td><td class="c cl">Closed</td><td></td><td class="r">10/25/2020</td><td class="r">0</td></tr>
<tr><td>Risk issue 8</td><td>Department 1</td><td class="c">20%</td><td class="c">4</td><td class="c">0.8</td><td class="c low">Low</td><td></td><td class="c cl">Closed</td><td></td><td class="r">10/26/2020</td><td class="r">0</td></tr>
<tr class="o"><td>Risk issue 9</td><td>Department 4</td><td class="c">10%</td><td class="c">1</td><td class="c">0.1</td><td class="c weak">Weak</td><td></td><td class="c ip">In-progress</td><td></td><td class="r">11/22/2020</td><td class="r">3</td></tr>
<tr><td>Risk issue 10</td><td>Department 3</td><td class="c">70%</td><td class="c">5</td><td class="c">3.5</td><td class="c high">High</td><td></td><td class="c ns">Not start</td><td></td><td class="r">11/7/2020</td><td class="r">0</td></tr>
<tr class="o"><td>Risk issue 11</td><td>Department 6</td><td class="c">30%</td><td class="c">3</td><td class="c">0.9</td><td class="c low">Low</td><td></td><td class="c cl">Closed</td><td></td><td class="r">11/1/2020</td><td class="r">0</td></tr>
</table>

<svg width="1915" height="1039" viewBox="0 0 1915 1039" style="pointer-events:none">
<rect x="483" y="548" width="78.5" height="14.5" fill="none" stroke="#217346" stroke-width="2"/>
<rect x="559" y="560" width="5" height="5" fill="#217346" stroke="#fff" stroke-width=".5"/>
<g stroke-width="1">
<circle cx="1031" cy="486" r="5.5" fill="#e5c78a" stroke="#c99c4e"/><path d="M1031 482.5V487M1031 488.5V490" stroke="#fff" stroke-width="1.5"/>
<circle cx="1031" cy="500" r="5.5" fill="#d9503f"/><path d="M1029 498L1033 502M1033 498L1029 502" stroke="#fff" stroke-width="1.3"/>
<circle cx="1031" cy="514" r="5.5" fill="#4f9a80"/><path d="M1028.5 514L1030.5 516L1033.5 512" fill="none" stroke="#fff" stroke-width="1.2"/>
<circle cx="1031" cy="528" r="5.5" fill="#e5c78a" stroke="#c99c4e"/><path d="M1031 524.5V529M1031 530.5V532" stroke="#fff" stroke-width="1.5"/>
<circle cx="1031" cy="542" r="5.5" fill="#d9503f"/><path d="M1029 540L1033 544M1033 540L1029 544" stroke="#fff" stroke-width="1.3"/>
<circle cx="1031" cy="556" r="5.5" fill="#e5c78a" stroke="#c99c4e"/><path d="M1031 552.5V557M1031 558.5V560" stroke="#fff" stroke-width="1.5"/>
<circle cx="1031" cy="570" r="5.5" fill="#4f9a80"/><path d="M1028.5 570L1030.5 572L1033.5 568" fill="none" stroke="#fff" stroke-width="1.2"/>
<circle cx="1031" cy="584" r="5.5" fill="#4f9a80"/><path d="M1028.5 584L1030.5 586L1033.5 582" fill="none" stroke="#fff" stroke-width="1.2"/>
<circle cx="1031" cy="598" r="5.5" fill="#e5c78a" stroke="#c99c4e"/><path d="M1031 594.5V599M1031 600.5V602" stroke="#fff" stroke-width="1.5"/>
<circle cx="1031" cy="612" r="5.5" fill="#d9503f"/><path d="M1029 610L1033 614M1033 610L1029 614" stroke="#fff" stroke-width="1.3"/>
<circle cx="1031" cy="626" r="5.5" fill="#4f9a80"/><path d="M1028.5 626L1030.5 628L1033.5 624" fill="none" stroke="#fff" stroke-width="1.2"/>
</g>
<text x="1038.5" y="504" style="font-size:11.3px;fill:#111">-</text><text x="1038.5" y="546" style="font-size:11.3px;fill:#111">-</text><text x="1038.5" y="616" style="font-size:11.3px;fill:#111">-</text>
</svg>
</body></html>
